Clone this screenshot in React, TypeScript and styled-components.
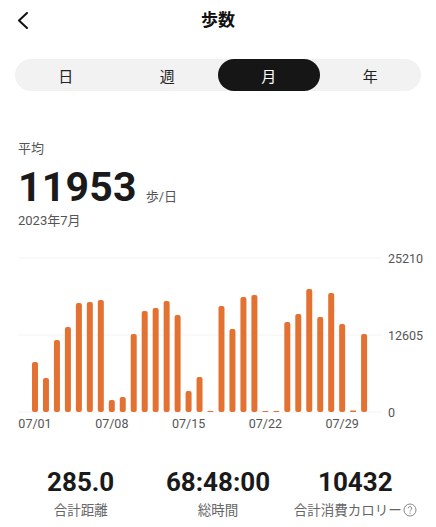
import React, { useState } from 'react';
import styled, { createGlobalStyle } from 'styled-components';

const GlobalStyle = createGlobalStyle`
  body {
    margin: 0;
    background: #ffffff;
    font-family: Roboto, "Noto Sans CJK JP", "Noto Sans", sans-serif;
    color: #1b1b1b;
  }
`;

const steps = [
  8200, 5560, 11800, 13900, 17850, 18000, 18350, 1960, 2460, 12770,
  16540, 17020, 18180, 15880, 3440, 5730, 100, 17350, 13590, 18840,
  19170, 100, 100, 14740, 16050, 20140, 15560, 19490, 14410, 250, 12770,
];

const MAX = 25210;
const tabs = ['日', '週', '月', '年'];

const Page = styled.div`
  width: 436px;
  display: flex;
  flex-direction: column;
`;

const Header = styled.header`
  height: 40px;
  display: grid;
  grid-template-columns: 1fr auto 1fr;
  align-items: center;
`;

const BackButton = styled.button`
  justify-self: start;
  margin-left: 13px;
  margin-top: -1px;
  width: 20px;
  height: 24px;
  padding: 0;
  border: none;
  background: none;
  display: flex;
  align-items: center;
  justify-content: center;
`;

const Title = styled.h1`
  margin: 0;
  font-size: 17px;
  font-weight: 700;
  line-height: 40px;
  color: #111;
`;

const Segments = styled.div`
  margin: 19px 15px 0;
  height: 32px;
  border-radius: 16px;
  background: #f2f2f2;
  display: grid;
  grid-template-columns: repeat(4, 1fr);
`;

const Segment = styled.button<{ $active: boolean }>`
  border: none;
  border-radius: 16px;
  padding: 0;
  font-family: inherit;
  font-size: 15px;
  background: ${(p) => (p.$active ? '#161616' : 'transparent')};
  color: ${(p) => (p.$active ? '#ffffff' : '#222')};
`;

const Summary = styled.section`
  margin-top: 49px;
  padding-left: 18px;
  display: flex;
  flex-direction: column;
`;

const Caption = styled.div`
  font-size: 13px;
  line-height: 18px;
  color: #555;
`;

const AverageRow = styled.div`
  margin-top: 4px;
  display: flex;
  align-items: baseline;
  gap: 9px;
`;

const AverageValue = styled.span`
  font-size: 41px;
  font-weight: 700;
  line-height: 50px;
  color: #1a1a1a;
  letter-spacing: 0.2px;
`;

const Unit = styled.span`
  font-size: 13px;
  color: #555;
`;

const ChartBox = styled.div`
  margin-top: 21px;
  height: 182px;
`;

const Stats = styled.section`
  margin-top: 34px;
  padding: 0 12px;
  display: grid;
  grid-template-columns: repeat(3, 1fr);
`;

const Stat = styled.div`
  display: flex;
  flex-direction: column;
  align-items: center;
`;

const StatValue = styled.div`
  font-size: 26px;
  font-weight: 700;
  line-height: 30px;
  color: #1a1a1a;
`;

const StatLabel = styled.div`
  margin-top: 4px;
  font-size: 13.5px;
  line-height: 18px;
  color: #666;
  display: flex;
  align-items: center;
  gap: 1px;
`;

const Help = () => (
  <svg width="14" height="14" viewBox="0 0 14 14">
    <circle cx="7" cy="7" r="6" fill="none" stroke="#888" strokeWidth="1" />
    <path d="M5.2 5.4a1.8 1.8 0 1 1 2.6 1.6c-.5.3-.8.6-.8 1.2v.4" fill="none" stroke="#888" strokeWidth="1" />
    <circle cx="7" cy="10.2" r="0.6" fill="#888" />
  </svg>
);

const StepChart = () => {
  const base = 161;
  const top = 7;
  const span = base - top;
  const barX = (i: number) => 35 + i * 10.97;
  return (
    <svg width="436" height="182" viewBox="0 0 436 182">
      {[top, top + span / 2, base].map((y) => (
        <line key={y} x1="18" x2="382" y1={y} y2={y} stroke="#f4f4f4" strokeWidth="1" />
      ))}
      {steps.map((v, i) => {
        const h = Math.max(1, (v / MAX) * span);
        return (
          <rect key={i} x={barX(i) - 3} y={base - h} width="6" height={h} rx={h > 4 ? 2 : 0.5} fill="#e37232" />
        );
      })}
      {[
        ['25210', top],
        ['12605', top + span / 2],
        ['0', base],
      ].map(([t, y]) => (
        <text key={t} x="388" y={Number(y) + 4.5} fontSize="12.5" fill="#555" fontFamily="Roboto, sans-serif">
          {t}
        </text>
      ))}
      {['07/01', '07/08', '07/15', '07/22', '07/29'].map((t, k) => (
        <text key={t} x={barX(k * 7)} y="177" textAnchor="middle" fontSize="12.5" fill="#555" fontFamily="Roboto, sans-serif">
          {t}
        </text>
      ))}
    </svg>
  );
};

export default function App() {
  const [tab, setTab] = useState(2);
  return (
    <Page>
      <GlobalStyle />
      <Header>
        <BackButton aria-label="back">
          <svg width="14" height="18" viewBox="0 0 14 18">
            <path d="M11 2 L3 9.5 L11 17" fill="none" stroke="#111" strokeWidth="2" strokeLinecap="round" strokeLinejoin="round" />
          </svg>
        </BackButton>
        <Title>歩数</Title>
      </Header>
      <Segments>
        {tabs.map((t, i) => (
          <Segment key={t} $active={i === tab} onClick={() => setTab(i)}>
            {t}
          </Segment>
        ))}
      </Segments>
      <Summary>
        <Caption>平均</Caption>
        <AverageRow>
          <AverageValue>11953</AverageValue>
          <Unit>歩/日</Unit>
        </AverageRow>
        <Caption>2023年7月</Caption>
      </Summary>
      <ChartBox>
        <StepChart />
      </ChartBox>
      <Stats>
        <Stat>
          <StatValue>285.0</StatValue>
          <StatLabel>合計距離</StatLabel>
        </Stat>
        <Stat>
          <StatValue>68:48:00</StatValue>
          <StatLabel>総時間</StatLabel>
        </Stat>
        <Stat>
          <StatValue>10432</StatValue>
          <StatLabel>
            合計消費カロリー
            <Help />
          </StatLabel>
        </Stat>
      </Stats>
    </Page>
  );
}
